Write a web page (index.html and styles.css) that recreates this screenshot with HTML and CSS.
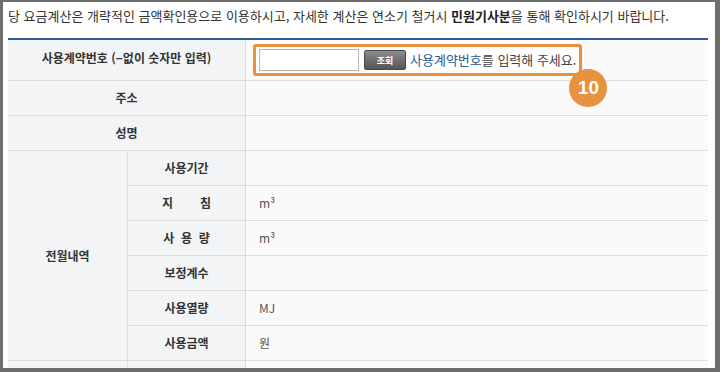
FILE: index.html
```html
<!DOCTYPE html>
<html lang="ko">
<head>
  <meta charset="UTF-8">
  <title>요금계산</title>
  <link rel="stylesheet" href="styles.css">
</head>
<body>
  <div class="frame">
    <p class="notice">당 요금계산은 개략적인 금액확인용으로 이용하시고, 자세한 계산은 연소기 철거시 <strong>민원기사분</strong>을 통해 확인하시기 바랍니다.</p>
    <table class="calc">
      <colgroup>
        <col class="c-group">
        <col class="c-sub">
        <col class="c-value">
      </colgroup>
      <tr class="first">
        <th colspan="2">사용계약번호 (−없이 숫자만 입력)</th>
        <td>
          <div class="lookup">
            <input type="text" class="lookup-input">
            <button class="lookup-btn">조회</button>
            <span class="lookup-msg"><em>사용계약번호</em>를 입력해 주세요.</span>
            <span class="step">10</span>
          </div>
        </td>
      </tr>
      <tr>
        <th colspan="2">주소</th>
        <td></td>
      </tr>
      <tr>
        <th colspan="2">성명</th>
        <td></td>
      </tr>
      <tr>
        <th rowspan="6">전월내역</th>
        <th>사용기간</th>
        <td></td>
      </tr>
      <tr>
        <th>지&nbsp;&nbsp;&nbsp;&nbsp;&nbsp;&nbsp;&nbsp;&nbsp;침</th>
        <td>m³</td>
      </tr>
      <tr>
        <th>사&nbsp;&nbsp;용&nbsp;&nbsp;량</th>
        <td>m³</td>
      </tr>
      <tr>
        <th>보정계수</th>
        <td></td>
      </tr>
      <tr>
        <th>사용열량</th>
        <td>MJ</td>
      </tr>
      <tr>
        <th>사용금액</th>
        <td>원</td>
      </tr>
      <tr>
        <th rowspan="2"></th>
        <th></th>
        <td></td>
      </tr>
      <tr>
        <th></th>
        <td></td>
      </tr>
    </table>
  </div>
</body>
</html>
```

FILE: styles.css
```css
body {
  margin: 0;
  font-family: "Noto Sans CJK KR", "Noto Sans", sans-serif;
  background: #fff;
}
.frame {
  box-sizing: border-box;
  width: 720px;
  height: 372px;
  overflow: hidden;
  border-style: solid;
  border-color: #6e6e6e;
  border-width: 2px 5px 4px 3px;
  padding: 0 8px 0 5px;
  background: #fff;
}
.notice {
  margin: 0;
  padding: 6px 0 14px;
  font-size: 13px;
  line-height: 16px;
  color: #333;
  white-space: nowrap;
}
.notice strong {
  color: #222;
}
.calc {
  width: 700px;
  table-layout: fixed;
  border-collapse: separate;
  border-spacing: 0;
  border-top: 2px solid #2c5d9a;
}
.c-group {
  width: 120px;
}
.c-sub {
  width: 118px;
}
.c-value {
  width: 462px;
}
.calc th,
.calc td {
  box-sizing: border-box;
  height: 35px;
  padding: 0;
  border-bottom: 1px solid #dcdcdc;
  font-size: 12px;
  line-height: 14px;
}
.calc th {
  background: #f3f4f6;
  border-right: 1px solid #dcdcdc;
  color: #333;
  font-weight: bold;
  text-align: center;
}
.calc td {
  background: #fafafa;
  padding-left: 13px;
  color: #555;
}
.calc tr.first th,
.calc tr.first td {
  height: 41px;
}
.calc tr.first th {
  padding-bottom: 4px;
}
.calc tr.first td {
  padding-left: 7px;
}
.lookup {
  position: relative;
  display: inline-flex;
  align-items: center;
  box-sizing: border-box;
  height: 32px;
  padding: 0 3px;
  border: 3px solid #e8913e;
  border-radius: 3px;
  background: #fff;
}
.lookup-input {
  box-sizing: border-box;
  width: 100px;
  height: 22px;
  margin: 0;
  border: 1px solid #b5b5b5;
  background: #fff;
}
.lookup-btn {
  box-sizing: border-box;
  width: 42px;
  height: 20px;
  margin: 0 4px 0 5px;
  padding: 0;
  border: 1px solid #4a4a4a;
  border-radius: 2px;
  background: linear-gradient(#8c8c8c, #555);
  color: #fff;
  font-family: inherit;
  font-size: 9px;
  font-weight: bold;
}
.lookup-msg {
  font-size: 13px;
  color: #444;
  white-space: nowrap;
}
.lookup-msg em {
  font-style: normal;
  color: #2a5a93;
}
.step {
  position: absolute;
  right: -28px;
  top: 22px;
  width: 38px;
  height: 38px;
  border-radius: 50%;
  background: #e8913e;
  color: #fff;
  font-family: "Liberation Sans", Arial, sans-serif;
  font-size: 19px;
  font-weight: bold;
  line-height: 38px;
  text-align: center;
}
```
